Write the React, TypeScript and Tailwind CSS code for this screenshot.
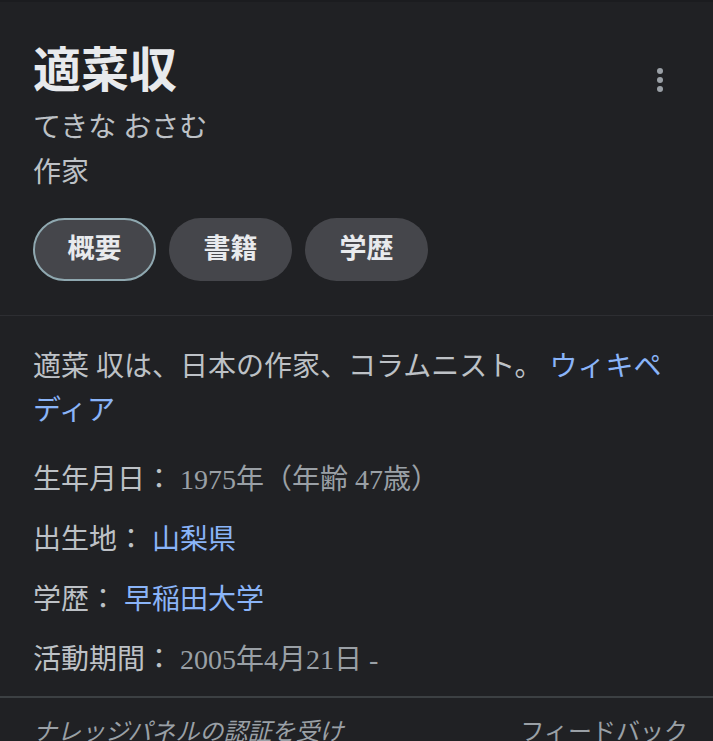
const rows = [
  { label: "生年月日：", value: "1975年（年齢 47歳）", link: false },
  { label: "出生地：", value: "山梨県", link: true },
  { label: "学歴：", value: "早稲田大学", link: true },
  { label: "活動期間：", value: "2005年4月21日 -", link: false },
];

function MoreIcon() {
  return (
    <svg width="8" height="26" viewBox="0 0 8 26" className="mt-[27px] fill-[#9aa0a6]">
      <circle cx="4" cy="4" r="3" />
      <circle cx="4" cy="13" r="3" />
      <circle cx="4" cy="22" r="3" />
    </svg>
  );
}

export default function App() {
  return (
    <div className="h-[741px] w-full overflow-hidden border-t-2 border-[#1b1c1f] bg-[#202124] font-['Liberation_Serif','Noto_Sans_CJK_JP',serif] text-[#e8eaed]">
      <div className="flex items-start justify-between pl-[33px] pr-[49px] pt-[38px]">
        <div>
          <h1 className="text-[48px] font-bold leading-[62px]">適菜収</h1>
          <p className="mt-[6px] text-[28px] leading-[40px] text-[#bdc1c6]">てきな おさむ</p>
          <p className="mt-[5px] text-[28px] leading-[40px] text-[#bdc1c6]">作家</p>
        </div>
        <MoreIcon />
      </div>

      <div className="flex gap-[13px] px-[33px] pt-[25px]">
        {["概要", "書籍", "学歴"].map((t, i) => (
          <button
            key={t}
            type="button"
            className={
              i === 0
                ? "h-[63px] w-[123px] rounded-full border-2 border-[#8fa8b0] bg-[#45464b] text-[27px] font-bold text-[#e8eaed]"
                : "h-[63px] w-[123px] rounded-full bg-[#45464b] text-[27px] font-bold text-[#e8eaed]"
            }
          >
            {t}
          </button>
        ))}
      </div>

      <div className="mt-[34px] h-px bg-[#2d2e32]" />

      <div className="px-[33px] pt-[29px]">
        <p className="text-[28px] leading-[44px] text-[#bdc1c6]">
          適菜 収は、日本の作家、コラムニスト。 <span className="text-[#8ab4f8]">ウィキペディア</span>
        </p>
        <div className="mt-[17px] flex flex-col">
          {rows.map((r) => (
            <div key={r.label} className="flex h-[60px] items-center text-[28px]">
              <span className="text-[#bdc1c6]">{r.label}</span>
              <span className={r.link ? "ml-[7px] text-[#8ab4f8]" : "ml-[7px] text-[#9aa0a6]"}>{r.value}</span>
            </div>
          ))}
        </div>
      </div>

      <div className="mt-[6px] h-[2px] bg-[#3c4043]" />

      <div className="flex justify-between pl-[33px] pr-[25px] pt-[16px] text-[24px] leading-[36px] text-[#9aa0a6]">
        <span className="italic">ナレッジパネルの認証を受け</span>
        <span>フィードバック</span>
      </div>
    </div>
  );
}
